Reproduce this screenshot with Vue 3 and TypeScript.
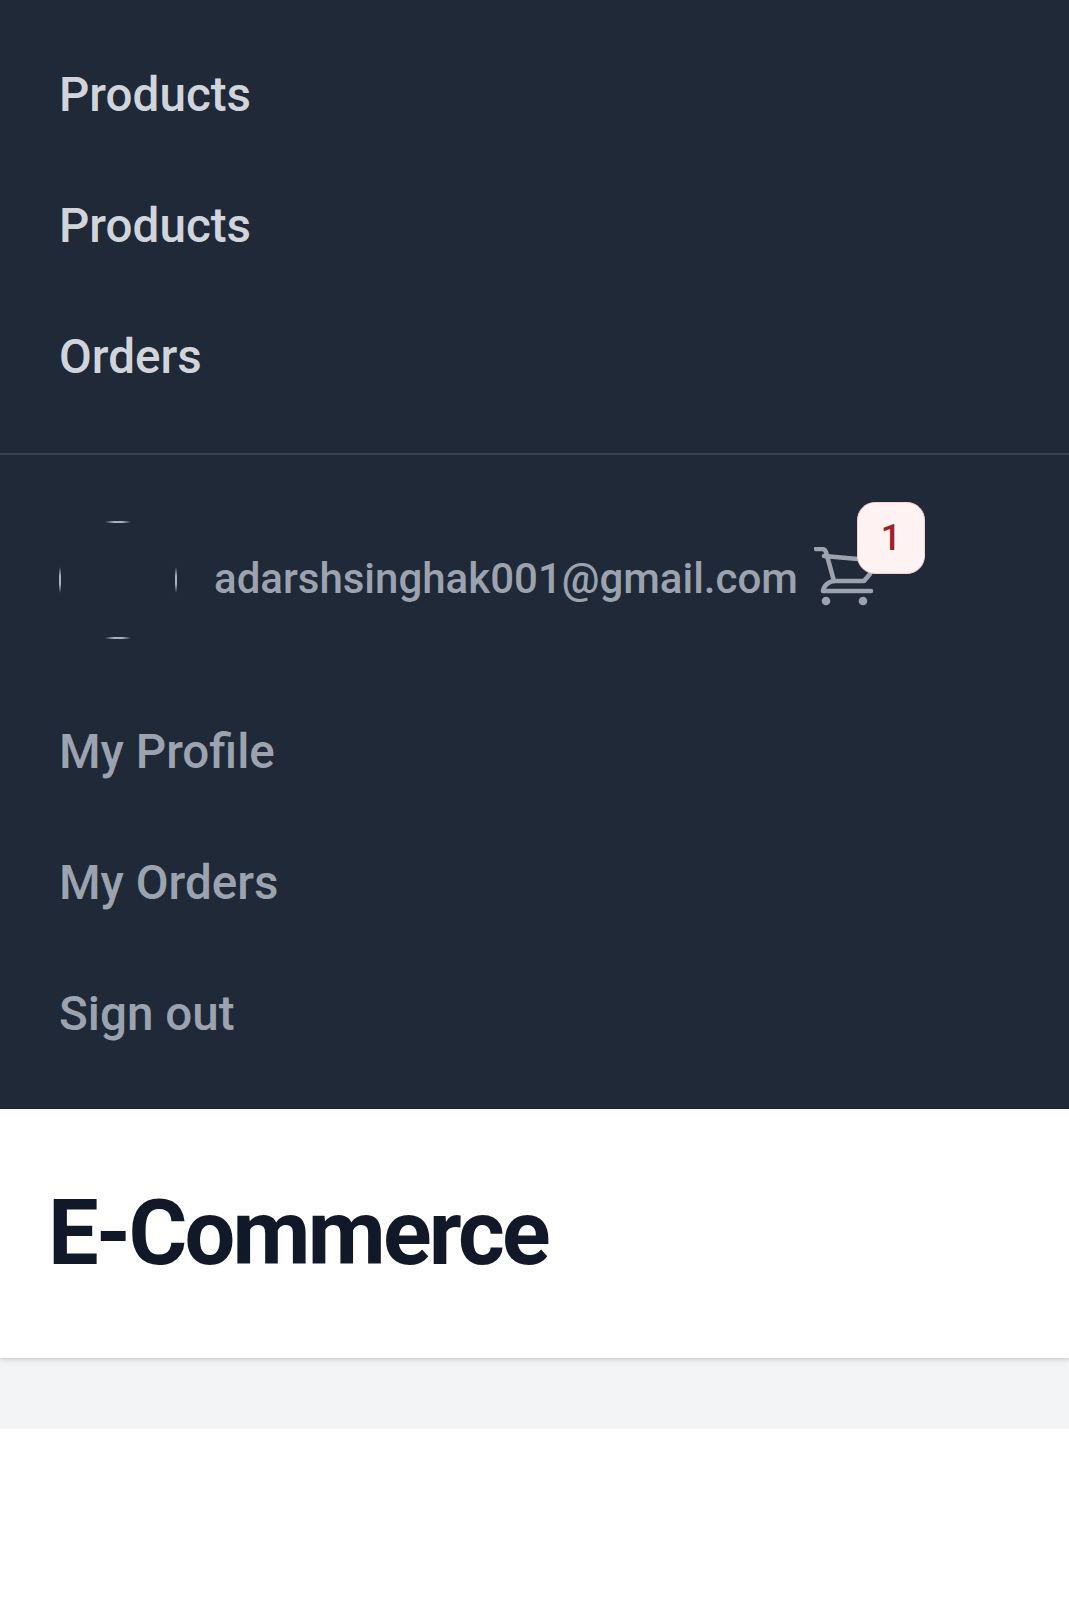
<script setup lang="ts">
const mainLinks: string[] = ['Products', 'Products', 'Orders']
const userLinks: string[] = ['My Profile', 'My Orders', 'Sign out']
</script>

<template>
  <div class="page">
    <nav class="nav">
      <div class="main-links">
        <a v-for="(l, i) in mainLinks" :key="i" class="link main">{{ l }}</a>
      </div>
      <div class="user-section">
        <div class="user-row">
          <div class="avatar">
            <i class="tick top"></i><i class="tick bottom"></i>
            <i class="tick left"></i><i class="tick right"></i>
          </div>
          <span class="email">adarshsinghak001@gmail.com</span>
          <div class="cart">
            <svg class="cart-icon" viewBox="0 0 60 60" fill="none" stroke="#9ca3af" stroke-width="4.6" stroke-linecap="round" stroke-linejoin="round">
              <path d="M2 2h6q3 0 4 3l8 29" />
              <path d="M10 9l34 3" />
              <path d="M56 27l-6 7H20q-6 1-9 5q-2 3-2 5h48" />
              <circle cx="12" cy="54" r="3" fill="#9ca3af" stroke-width="2.6" />
              <circle cx="49" cy="54" r="3" fill="#9ca3af" stroke-width="2.6" />
            </svg>
            <span class="badge">1</span>
          </div>
        </div>
        <div class="user-links">
          <a v-for="l in userLinks" :key="l" class="link user">{{ l }}</a>
        </div>
      </div>
    </nav>
    <header class="header">
      <h1 class="title">E-Commerce</h1>
    </header>
    <div class="band"></div>
  </div>
</template>

<style scoped>
.page {
  font-family: Roboto, "Noto Sans", sans-serif;
  background: #fff;
  min-height: 1600px;
  width: 100%;
}
.nav {
  background: #1f2937;
}
.main-links {
  display: flex;
  flex-direction: column;
  padding: 30px 0 30px;
  border-bottom: 2px solid #374151;
}
.link {
  display: block;
  height: 131px;
  line-height: 131px;
  padding-left: 59px;
  font-size: 47.6px;
  font-weight: 500;
}
.main {
  color: #d1d5db;
}
.user {
  color: #9ca3af;
}
.user-section {
  padding-top: 67px;
}
.user-row {
  display: flex;
  align-items: center;
  padding-left: 59px;
  height: 118px;
}
.avatar {
  position: relative;
  width: 118px;
  height: 118px;
  margin-top: -2px;
  flex: none;
}
.tick {
  position: absolute;
}
.tick.top, .tick.bottom {
  left: 46px;
  width: 26px;
  height: 2px;
  background: linear-gradient(90deg, transparent, #aab2bd 35%, #aab2bd 65%, transparent);
}
.tick.top { top: 0; }
.tick.bottom { bottom: 0; }
.tick.left, .tick.right {
  top: 46px;
  width: 2px;
  height: 26px;
  background: linear-gradient(180deg, transparent, #aab2bd 35%, #aab2bd 65%, transparent);
}
.tick.left { left: 0; }
.tick.right { right: 0; }
.email {
  margin-left: 37px;
  font-size: 42px;
  line-height: 118px;
  height: 118px;
  margin-top: -4px;
  font-weight: 500;
  color: #9ca3af;
  white-space: nowrap;
}
.cart {
  position: relative;
  margin-left: 16px;
  width: 60px;
  height: 60px;
  flex: none;
  margin-top: -8px;
}
.cart-icon {
  display: block;
  width: 60px;
  height: 60px;
}
.badge {
  position: absolute;
  left: 43px;
  top: -45px;
  width: 68px;
  height: 72px;
  box-sizing: border-box;
  display: flex;
  align-items: center;
  justify-content: center;
  background: #fef2f2;
  border: 1px solid #fecaca;
  border-radius: 18px;
  color: #a0202a;
  font-size: 36px;
  font-weight: 500;
}
.user-links {
  display: flex;
  flex-direction: column;
  padding-top: 47px;
  padding-bottom: 29px;
}
.header {
  background: #fff;
  height: 249px;
  display: flex;
  align-items: center;
  padding-left: 48px;
  box-sizing: border-box;
  box-shadow: 0 2px 6px rgba(0, 0, 0, 0.12), 0 1px 2px rgba(0, 0, 0, 0.08);
  position: relative;
}
.title {
  margin: 0;
  font-size: 90px;
  font-weight: 700;
  letter-spacing: -2.8px;
  color: #111827;
}
.band {
  height: 71px;
  background: #f3f4f6;
}
</style>
